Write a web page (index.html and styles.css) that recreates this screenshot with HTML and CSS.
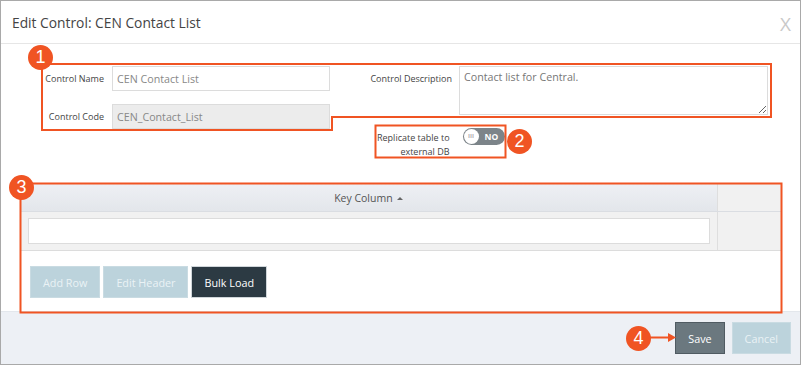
FILE: index.html
```html
<!DOCTYPE html>
<html lang="en">
<head>
    <meta charset="UTF-8">
    <title>Edit Control: CEN Contact List</title>
    <link rel="stylesheet" href="styles.css">
</head>
<body>
    <div class="dialog">
        <div class="dialog-head">
            <h1>Edit Control: CEN Contact List</h1>
            <span class="close">X</span>
        </div>

        <div class="dialog-body">
            <div class="fields">
                <div class="field-col">
                    <div class="field">
                        <label>Control Name</label>
                        <input type="text" value="CEN Contact List">
                    </div>
                    <div class="field">
                        <label>Control Code</label>
                        <input type="text" value="CEN_Contact_List" disabled>
                    </div>
                </div>
                <div class="field field-desc">
                    <label>Control Description</label>
                    <textarea>Contact list for Central.</textarea>
                </div>
            </div>

            <div class="replicate">
                <span class="replicate-label">Replicate table to<br>external DB</span>
                <span class="toggle"><span class="knob">III</span><span class="toggle-text">NO</span></span>
            </div>

            <table class="grid">
                <colgroup>
                    <col>
                    <col class="extra">
                </colgroup>
                <tr>
                    <th class="key-col">Key Column <span class="sort"></span></th>
                    <th class="extra-col"></th>
                </tr>
                <tr>
                    <td class="key-col"><input type="text"></td>
                    <td class="extra-col"></td>
                </tr>
            </table>

            <div class="grid-actions">
                <button class="btn btn-light">Add Row</button>
                <button class="btn btn-light">Edit Header</button>
                <button class="btn btn-dark">Bulk Load</button>
            </div>
        </div>

        <div class="dialog-foot">
            <button class="btn btn-save">Save</button>
            <button class="btn btn-light">Cancel</button>
        </div>

        <!-- callouts drawn over the screenshot -->
        <svg class="callouts" width="802" height="365" viewBox="0 0 802 365">
            <polygon points="42,64 771,64 771,117 332,117 332,130 42,130" />
            <rect x="375.5" y="125.5" width="130" height="32" />
            <rect x="20.5" y="183.5" width="761" height="129" />
            <line x1="648" y1="337.5" x2="669" y2="337.5" />
            <polygon class="arrow-head" points="668,333 676,337.5 668,342" />
        </svg>
        <span class="badge badge-1">1</span>
        <span class="badge badge-2">2</span>
        <span class="badge badge-3">3</span>
        <span class="badge badge-4">4</span>
    </div>
</body>
</html>
```

FILE: styles.css
```css
body {
    margin: 0;
    font-family: "Open Sans", Arial, sans-serif;
    background: #fff;
}

.dialog {
    position: relative;
    width: 801px;
    height: 365px;
    box-sizing: border-box;
    border: 1px solid #a9a9a9;
    display: flex;
    flex-direction: column;
    background: #fff;
}

.dialog-head {
    height: 42px;
    border-bottom: 1px solid #e6e6e6;
    display: flex;
    align-items: center;
    justify-content: space-between;
    padding: 0 9px 0 11px;
}

h1 {
    margin: 0;
    font-size: 13.8px;
    font-weight: normal;
    color: #444;
}

.close {
    font-size: 19px;
    color: #c9c9c9;
    margin-top: 4px;
}

.dialog-body {
    height: 245px;
    padding: 22px 19px 0 20px;
}

.fields {
    display: flex;
    margin-left: 19px;
}

.field-col {
    display: flex;
    flex-direction: column;
    gap: 13px;
}

.field {
    display: flex;
    align-items: center;
}

.field label {
    width: 64px;
    margin-right: 8px;
    text-align: right;
    font-size: 9px;
    color: #444;
}

.field input {
    width: 218px;
    height: 25px;
    box-sizing: border-box;
    border: 1px solid #dcdcdc;
    padding: 0 4px;
    font-family: inherit;
    font-size: 10.7px;
    color: #888;
    background: #fff;
}

.field input:disabled {
    background: #ececec;
    color: #888;
}

.field-desc {
    align-items: flex-start;
    margin-left: 10px;
}

.field-desc label {
    width: 112px;
    margin-right: 7px;
    line-height: 25px;
}

.field-desc textarea {
    width: 309px;
    height: 49px;
    box-sizing: border-box;
    border: 1px solid #dcdcdc;
    padding: 3px 4px;
    font-family: inherit;
    font-size: 10.7px;
    color: #777;
}

.replicate {
    display: flex;
    margin: 2px 0 0 356px;
    gap: 13px;
}

.replicate-label {
    font-size: 9px;
    line-height: 14px;
    color: #444;
    text-align: right;
}

.toggle {
    display: flex;
    align-items: center;
    width: 42px;
    height: 17px;
    margin-top: -3px;
    border-radius: 9px;
    background: #7c8489;
}

.knob {
    width: 15px;
    height: 15px;
    margin-left: 1px;
    border-radius: 50%;
    background: #fff;
    font-size: 6px;
    font-weight: bold;
    line-height: 15px;
    text-align: center;
    color: #b0b0b0;
}

.toggle-text {
    margin-left: 6px;
    font-size: 8.5px;
    font-weight: bold;
    color: #fff;
}

.grid {
    width: 760px;
    margin-top: 25px;
    border-collapse: collapse;
    table-layout: fixed;
}

.grid col.extra {
    width: 64px;
}

.grid th {
    height: 27px;
    padding: 0;
    border-bottom: 1px solid #dadde2;
    background: linear-gradient(#eef0f4, #e3e6eb);
    font-size: 10.5px;
    font-weight: normal;
    color: #555;
}

.grid th.extra-col {
    background: #f1f1f1;
}

.grid td {
    height: 38px;
    padding: 0 7px;
    border-bottom: 1px solid #dcdcdc;
    background: #f1f1f1;
}

.key-col {
    border-right: 1px solid #dedede;
}

.grid td input {
    width: 100%;
    height: 26px;
    box-sizing: border-box;
    border: 1px solid #dcdcdc;
    background: #fff;
}

.sort {
    display: inline-block;
    vertical-align: middle;
    margin-left: 2px;
    border-left: 3px solid transparent;
    border-right: 3px solid transparent;
    border-bottom: 3px solid #666;
}

.grid-actions {
    display: flex;
    gap: 3px;
    margin: 15px 0 0 9px;
}

.btn {
    height: 32px;
    padding: 0 12px;
    border: 1px solid transparent;
    font-family: inherit;
    font-size: 10.8px;
}

.btn-light {
    background: #bcd3dc;
    border-color: #c9dbe2;
    color: #eaf2f5;
}

.btn-dark {
    background: #2c3a43;
    border-color: #d0d6da;
    color: #fff;
}

.dialog-foot {
    flex: 1;
    display: flex;
    justify-content: flex-end;
    gap: 7px;
    padding: 10px 9px 0 0;
    background: #edf0f5;
    border-top: 1px solid #e3e7ec;
}

.btn-save {
    background: #6b787f;
    border-color: #505b62;
    color: #fff;
}

.callouts {
    position: absolute;
    top: -1px;
    left: -1px;
    pointer-events: none;
}

.callouts polygon,
.callouts rect,
.callouts line {
    fill: none;
    stroke: #f05423;
    stroke-width: 2;
}

.callouts .arrow-head {
    fill: #f05423;
    stroke: none;
}

.badge {
    position: absolute;
    width: 25px;
    height: 25px;
    border-radius: 50%;
    background: #f05423;
    color: #fff;
    font-family: "Liberation Sans", Arial, sans-serif;
    font-size: 18px;
    line-height: 25px;
    text-align: center;
}

.badge-1 { left: 27px; top: 44px; }
.badge-2 { left: 506px; top: 128px; }
.badge-3 { left: 8px; top: 174px; }
.badge-4 { left: 625px; top: 325px; }
```
